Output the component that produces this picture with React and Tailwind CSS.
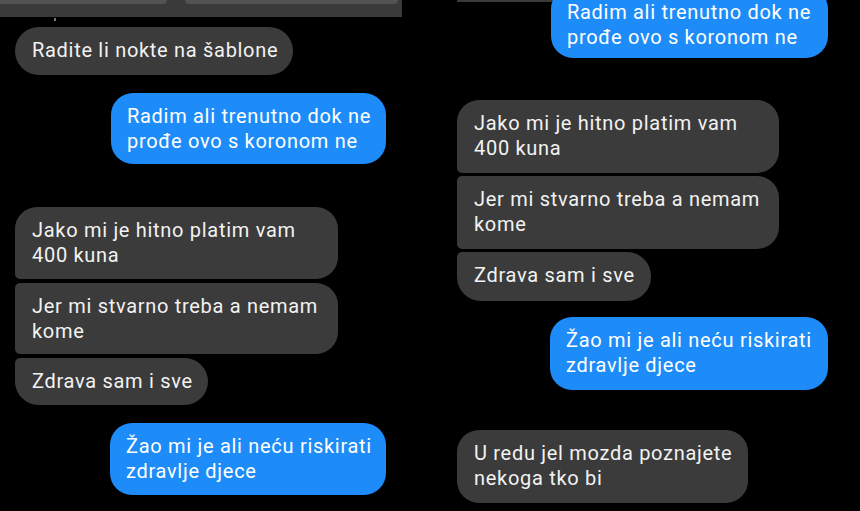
const gray = "bg-[#3b3b3b] text-[#f2f2f2]";
const blue = "bg-[#1d8cf8] text-white";

function Bubble({ className = "", lines }) {
  return (
    <div
      className={`px-[17px] py-[11px] text-[20px] leading-[25px] tracking-[0.7px] whitespace-nowrap ${className}`}
    >
      {lines.map((line) => (
        <div key={line}>{line}</div>
      ))}
    </div>
  );
}

function LeftPanel() {
  return (
    <div className="w-[402px] shrink-0 flex flex-col">
      <div className="h-[17px] bg-[#3a3a3a] flex gap-[18px] pr-[4px]">
        <div className="w-[167px] h-[4px] bg-[#525252] rounded-br-[6px]" />
        <div className="flex-1 h-[4px] bg-[#525252] rounded-b-[6px]" />
      </div>
      <div className="h-[10px] pl-[54px]">
        <div className="w-[2px] h-[3px] mt-[1px] bg-[#777]" />
      </div>
      <Bubble
        className={`${gray} ml-[15px] w-[278px] h-[48px] rounded-[24px]`}
        lines={["Radite li nokte na šablone"]}
      />
      <Bubble
        className={`${blue} self-end mr-[16px] mt-[18px] w-[275px] h-[71px] rounded-[22px] pl-[16px]`}
        lines={["Radim ali trenutno dok ne", "prođe ovo s koronom ne"]}
      />
      <div className="flex flex-col gap-[4px] mt-[43px] ml-[15px]">
        <Bubble
          className={`${gray} w-[323px] h-[72px] rounded-[22px] rounded-bl-[5px]`}
          lines={["Jako mi je hitno platim vam", "400 kuna"]}
        />
        <Bubble
          className={`${gray} w-[323px] h-[71px] rounded-[22px] rounded-l-[5px]`}
          lines={["Jer mi stvarno treba a nemam", "kome"]}
        />
        <Bubble
          className={`${gray} w-[193px] h-[47px] rounded-[24px] rounded-tl-[5px]`}
          lines={["Zdrava sam i sve"]}
        />
      </div>
      <Bubble
        className={`${blue} self-end mr-[16px] mt-[18px] w-[276px] h-[72px] rounded-[22px] pl-[16px]`}
        lines={["Žao mi je ali neću riskirati", "zdravlje djece"]}
      />
    </div>
  );
}

function RightPanel() {
  return (
    <div className="flex-1 flex flex-col pl-[20px] pr-[32px]">
      <div className="h-[2px] w-[115px] bg-[#3a3a3a]" />
      <Bubble
        className={`${blue} self-end mt-[-15px] w-[277px] h-[71px] rounded-[22px] pl-[16px] pt-[13px]`}
        lines={["Radim ali trenutno dok ne", "prođe ovo s koronom ne"]}
      />
      <div className="flex flex-col gap-[3px] mt-[42px]">
        <Bubble
          className={`${gray} w-[322px] h-[73px] rounded-[22px] rounded-bl-[5px]`}
          lines={["Jako mi je hitno platim vam", "400 kuna"]}
        />
        <Bubble
          className={`${gray} w-[322px] h-[73px] rounded-[22px] rounded-l-[5px]`}
          lines={["Jer mi stvarno treba a nemam", "kome"]}
        />
        <Bubble
          className={`${gray} w-[194px] h-[49px] rounded-[24px] rounded-tl-[5px]`}
          lines={["Zdrava sam i sve"]}
        />
      </div>
      <Bubble
        className={`${blue} self-end mt-[16px] w-[278px] h-[73px] rounded-[22px] pl-[16px]`}
        lines={["Žao mi je ali neću riskirati", "zdravlje djece"]}
      />
      <Bubble
        className={`${gray} mt-[40px] w-[291px] h-[73px] rounded-[22px]`}
        lines={["U redu jel mozda poznajete", "nekoga tko bi"]}
      />
    </div>
  );
}

export default function App() {
  return (
    <div
      className="w-[860px] h-[511px] bg-black flex gap-[35px] overflow-hidden"
      style={{ fontFamily: "Roboto, 'Liberation Sans', sans-serif" }}
    >
      <LeftPanel />
      <RightPanel />
    </div>
  );
}
